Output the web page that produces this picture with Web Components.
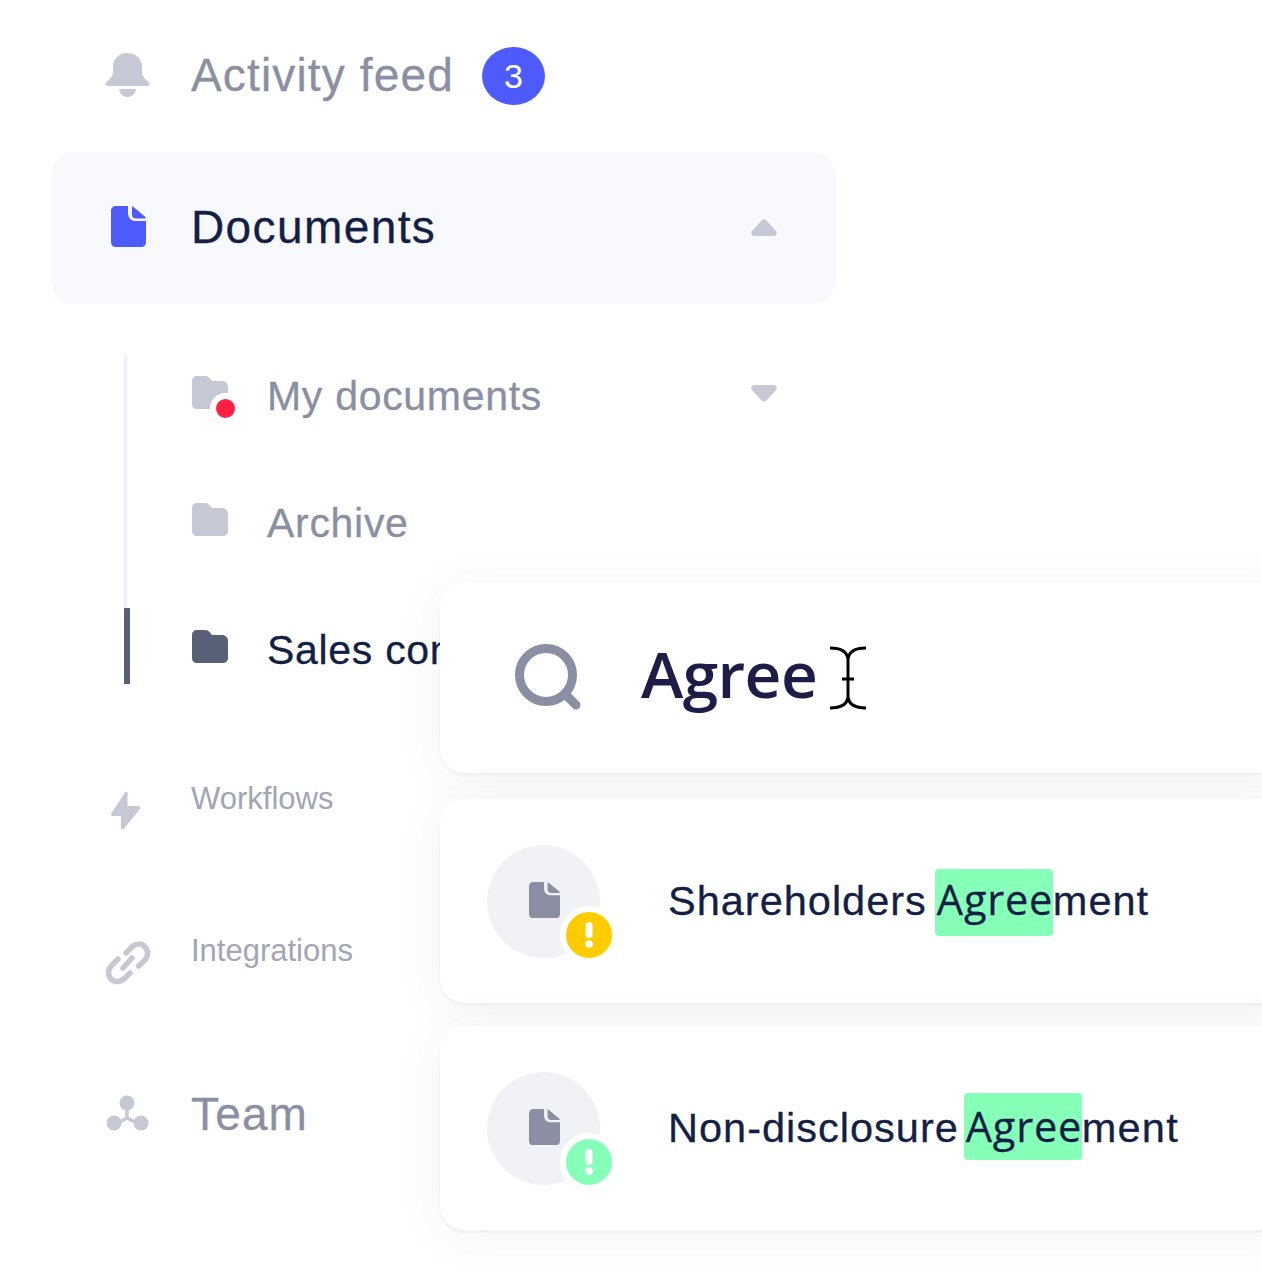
<!DOCTYPE html>
<html>
<head>
<meta charset="utf-8">
<style>
  html, body { margin: 0; background: #fff; }
  body { width: 1262px; height: 1276px; overflow: hidden; position: relative; font-family: "Liberation Sans", Arial, sans-serif; }
</style>
</head>
<body>
<side-nav>
  <nav-row size="46" track="1.15" tone="muted">
    <svg slot="icon" width="45" height="45" viewBox="0 0 45 45" style="margin-top:-2px"><path fill="#c6c8d5" d="M22.500 0C31 0 37 6 37 14V19C37 23 40 26 43.500 29C45.500 31 44.500 33 42 33H3C.5 33-.5 31 1.500 29C5 26 8 23 8 19V14C8 6 14 0 22.500 0ZM14 36H31C30 41 27 44 22.500 44S15 41 14 36Z"/></svg>
    Activity feed
    <count-badge slot="after">3</count-badge>
  </nav-row>
  <nav-row size="46" track="1.4" tone="active" open>
    <doc-icon slot="icon" color="#4d5bff" size="35" style="margin-left:6px;margin-top:-3px"></doc-icon>
    Documents
    <svg slot="end" width="26" height="17" viewBox="0 0 26 17" style="margin:-2px 1px 0 0"><path fill="#c6c8d5" d="M10.500 1.500C12 0 14 0 15.500 1.500L25 12C26.500 14 25.500 17 23 17H3C.5 17-.5 14 1 12Z"/></svg>
  </nav-row>
  <sub-list>
    <sub-row>
      <folder-icon slot="icon" color="#c6c8d5" dot></folder-icon>
      My documents
      <svg slot="end" width="26" height="17" viewBox="0 0 26 17" style="margin-right:1px"><path fill="#c6c8d5" d="M10.500 15.500C12 17 14 17 15.500 15.500L25 5C26.500 3 25.500 0 23 0H3C.5 0-.5 3 1 5Z"/></svg>
    </sub-row>
    <sub-row>
      <folder-icon slot="icon" color="#c6c8d5"></folder-icon>
      Archive
    </sub-row>
    <sub-row active>
      <folder-icon slot="icon" color="#586078"></folder-icon>
      Sales contracts
    </sub-row>
  </sub-list>
  <nav-row size="31" tone="faint" style="margin-top:47px">
    <svg slot="icon" width="45" height="40" viewBox="0 0 45 40" style="margin-top:5px"><path fill="#c6c8d5" d="M20 1.500C21 0 22.500 .5 22.500 2V15H33C35 15 36 16.500 35 18L19 37.500C18 39 16 38.500 16 37V25H8C6 25 5.500 23.500 6.500 22Z" transform="translate(0 1)"/></svg>
    Workflows
  </nav-row>
  <nav-row size="31" tone="faint">
    <svg slot="icon" width="45" height="46" viewBox="0 0 45 46" style="margin-top:7px"><g fill="none" stroke="#c6c8d5" stroke-width="5.500" stroke-linecap="round"><path d="M13 19L7 25C2 30 3 36 6 39C10 43 16 42 20 38L25 33"/><path d="M18 28L27 18"/><path d="M21 13L26 8C30 3 37 3 40 7C44 11 43 17 39 21L33.500 26"/></g></svg>
    Integrations
  </nav-row>
  <nav-row size="46" track="1.15" tone="muted" style="margin-top:4px">
    <svg slot="icon" width="45" height="40" viewBox="0 0 45 40" style="margin-top:-4px"><g fill="#c6c8d5"><circle cx="22" cy="10" r="7.500"/><circle cx="9" cy="30" r="7.500"/><circle cx="36" cy="30" r="7.500"/></g><path fill="none" stroke="#c6c8d5" stroke-width="3.500" d="M22 14V26M22 25L11 31M22 25L34 31"/></svg>
    Team
  </nav-row>
</side-nav>

<search-card>Agree</search-card>
<result-card top="799" alert="#ffcc00" gap="8" mark-line="61" name-top="2" track="1">Shareholders</result-card>
<result-card top="1026" alert="#86ffb8" gap="5" mark-line="67" name-top="-4" track="1.2">Non-disclosure</result-card>

<script>
class SideNav extends HTMLElement {
  constructor() {
    super();
    this.attachShadow({ mode: "open" }).innerHTML = `
      <style>
        :host { display: flex; flex-direction: column; width: 785px; margin-left: 51px; }
      </style>
      <slot></slot>`;
  }
}

class NavRow extends HTMLElement {
  constructor() {
    super();
    const size = this.getAttribute("size") || 46;
    const track = this.getAttribute("track") || 0;
    this.attachShadow({ mode: "open" }).innerHTML = `
      <style>
        :host { display: flex; align-items: center; height: 152px; padding: 0 58px 0 54px; border-radius: 24px; font-size: ${size}px; color: #8a8fa3; box-sizing: border-box; -webkit-text-stroke: .3px; }
        :host([tone="active"]) { background: #f8f9fd; color: #141f45; }
        :host([tone="faint"]) { color: #a2a5b6; -webkit-text-stroke: 0; }
        :host([tone="faint"]) .label { margin-top: -16px; }
        .icon { width: 86px; display: flex; align-items: center; flex: none; }
        .label { white-space: nowrap; letter-spacing: ${track}px; margin-top: -2px; }
        .after { margin-left: 28px; display: flex; }
        .end { margin-left: auto; display: flex; }
      </style>
      <div class="icon"><slot name="icon"></slot></div>
      <div class="label"><slot></slot></div>
      <div class="after"><slot name="after"></slot></div>
      <div class="end"><slot name="end"></slot></div>`;
  }
}

class CountBadge extends HTMLElement {
  constructor() {
    super();
    this.attachShadow({ mode: "open" }).innerHTML = `
      <style>
        :host { display: flex; align-items: center; justify-content: center; width: 63px; height: 58px; border-radius: 50%; background: #4d5bff; color: #fff; font-size: 34px; letter-spacing: 0; -webkit-text-stroke: 0; }
      </style>
      <slot></slot>`;
  }
}

class DocIcon extends HTMLElement {
  constructor() {
    super();
    const s = this.getAttribute("size") || 31;
    const c = this.getAttribute("color");
    this.attachShadow({ mode: "open" }).innerHTML = `
      <style>:host { display: inline-flex; } svg { display: block; }</style>
      <svg width="${s}" height="${s * 41 / 35}" viewBox="0 0 35 41"><g fill="${c}">
        <path d="M5 0H17V7C17 12 20 15 25 15H35V36C35 39 33 41 30 41H5C2 41 0 39 0 36V5C0 2 2 0 5 0Z"/>
        <path d="M21 .5C21.500 .5 22 .5 22.500 1L34.500 11C35 11.500 34.500 12.500 34 12.500H25C22.500 12.500 21 11 21 8.500Z"/>
      </g></svg>`;
  }
}

class FolderIcon extends HTMLElement {
  constructor() {
    super();
    const c = this.getAttribute("color");
    const dot = this.hasAttribute("dot");
    this.attachShadow({ mode: "open" }).innerHTML = `
      <style>
        :host { display: block; position: relative; width: 36px; height: 33px; }
        svg { display: block; }
        i { position: absolute; left: 18px; top: 17px; width: 19px; height: 19px; border: 6px solid #fff; border-radius: 50%; background: #ff1f45; }
      </style>
      <svg width="36" height="33" viewBox="0 0 36 33"><path fill="${c}" d="M5 0H13C15 0 16.500 .8 17.500 2L20 5H30C33.500 5 36 7.500 36 10.500V28C36 31 33.500 33 31 33H5C2 33 0 31 0 28V5C0 2 2 0 5 0Z"/></svg>
      ${dot ? "<i></i>" : ""}`;
  }
}

class SubList extends HTMLElement {
  constructor() {
    super();
    this.attachShadow({ mode: "open" }).innerHTML = `
      <style>
        :host { display: block; margin: 50px 0 0 73px; width: 712px; }
      </style>
      <slot></slot>`;
  }
}

class SubRow extends HTMLElement {
  constructor() {
    super();
    this.attachShadow({ mode: "open" }).innerHTML = `
      <style>
        :host { display: flex; height: 127px; padding: 0 58px 0 65px; font-size: 41px; letter-spacing: .7px; color: #8a8fa3; box-sizing: border-box; border-left: 3px solid #f1f2f7; align-items: flex-start; position: relative; -webkit-text-stroke: .3px; }
        :host([active]) { color: #141f45; height: 76px; border-left: none; padding-left: 68px; }
        :host([active])::before { content: ""; position: absolute; left: 0; top: 0; width: 6px; height: 76px; background: #586078; }
        .icon { width: 75px; flex: none; margin-top: 22px; }
        .label { white-space: nowrap; margin-top: 19px; }
        .end { margin-left: auto; margin-top: 31px; display: flex; }
      </style>
      <div class="icon"><slot name="icon"></slot></div>
      <div class="label"><slot></slot></div>
      <div class="end"><slot name="end"></slot></div>`;
  }
}

const cardStyle = `
  :host { display: flex; align-items: center; position: absolute; left: 440px; right: -40px; background: #fff; border-radius: 24px; box-shadow: 0 2px 3px rgba(60,70,120,.06), 0 6px 50px rgba(60,70,120,.06); color: #141f45; }
`;

class SearchCard extends HTMLElement {
  constructor() {
    super();
    this.attachShadow({ mode: "open" }).innerHTML = `
      <style>
        ${cardStyle}
        :host { top: 582px; height: 191px; padding-left: 75px; }
        .glass { width: 126px; flex: none; display: flex; }
        .text { font-family: "Open Sans", sans-serif; font-size: 64px; line-height: 64px; color: #1e1d47; font-weight: 600; letter-spacing: -.6px; margin-top: -7px; }
        .caret { margin-left: 13px; display: flex; }
      </style>
      <div class="glass">
        <svg width="67" height="67" viewBox="0 0 67 67"><circle cx="31" cy="31" r="26.500" fill="none" stroke="#8a8fa3" stroke-width="9"/><path d="M50 50L61 61" fill="none" stroke="#8a8fa3" stroke-width="9" stroke-linecap="round"/></svg>
      </div>
      <div class="text"><slot></slot></div>
      <div class="caret">
        <svg width="36" height="64" viewBox="0 0 36 64"><path fill="none" stroke="#000" stroke-width="3" d="M0 2C9 2 17 5 18 13V51C17 59 9 62 0 62M36 2C27 2 19 5 18 13M36 62C27 62 19 59 18 51M12 33H24"/></svg>
      </div>`;
  }
}

class ResultCard extends HTMLElement {
  constructor() {
    super();
    const c = this.getAttribute("alert");
    const gap = this.getAttribute("gap");
    const line = this.getAttribute("mark-line");
    this.attachShadow({ mode: "open" }).innerHTML = `
      <style>
        ${cardStyle}
        :host { top: ${this.getAttribute("top")}px; height: 204px; padding-left: 47px; font-size: 41.500px; letter-spacing: 1px; -webkit-text-stroke: .3px; }
        .round { position: relative; width: 113px; height: 113px; border-radius: 50%; background: #f1f2f6; display: flex; align-items: center; justify-content: center; flex: none; }
        .round doc-icon { margin: -2px 0 0 1px; }
        .alert { position: absolute; left: 73px; top: 61px; width: 46px; height: 46px; border: 6px solid #fff; border-radius: 50%; background: ${c}; color: #fff; display: flex; align-items: center; justify-content: center; }
        .name { margin-left: 68px; margin-top: ${this.getAttribute("name-top")}px; white-space: nowrap; }
        .rest { letter-spacing: ${this.getAttribute("track")}px; }
        mark { display: inline-block; vertical-align: baseline; background: #86ffb8; color: inherit; border-radius: 4px; width: 118px; height: 67px; line-height: ${line}px; margin-left: ${gap}px; padding-left: 2px; box-sizing: border-box; font-family: "Open Sans", sans-serif; letter-spacing: .8px; white-space: nowrap; }
      </style>
      <div class="round">
        <doc-icon color="#8a8fa3" size="31"></doc-icon>
        <div class="alert"><svg width="10" height="26" viewBox="0 0 10 26"><rect x="1.500" y="0" width="7" height="16" rx="3.500" fill="#fff"/><circle cx="5" cy="22" r="3.800" fill="#fff"/></svg></div>
      </div>
      <div class="name"><slot></slot><mark>Agree</mark><span class="rest">ment</span></div>`;
  }
}

customElements.define("side-nav", SideNav);
customElements.define("nav-row", NavRow);
customElements.define("count-badge", CountBadge);
customElements.define("doc-icon", DocIcon);
customElements.define("folder-icon", FolderIcon);
customElements.define("sub-list", SubList);
customElements.define("sub-row", SubRow);
customElements.define("search-card", SearchCard);
customElements.define("result-card", ResultCard);
</script>
</body>
</html>
